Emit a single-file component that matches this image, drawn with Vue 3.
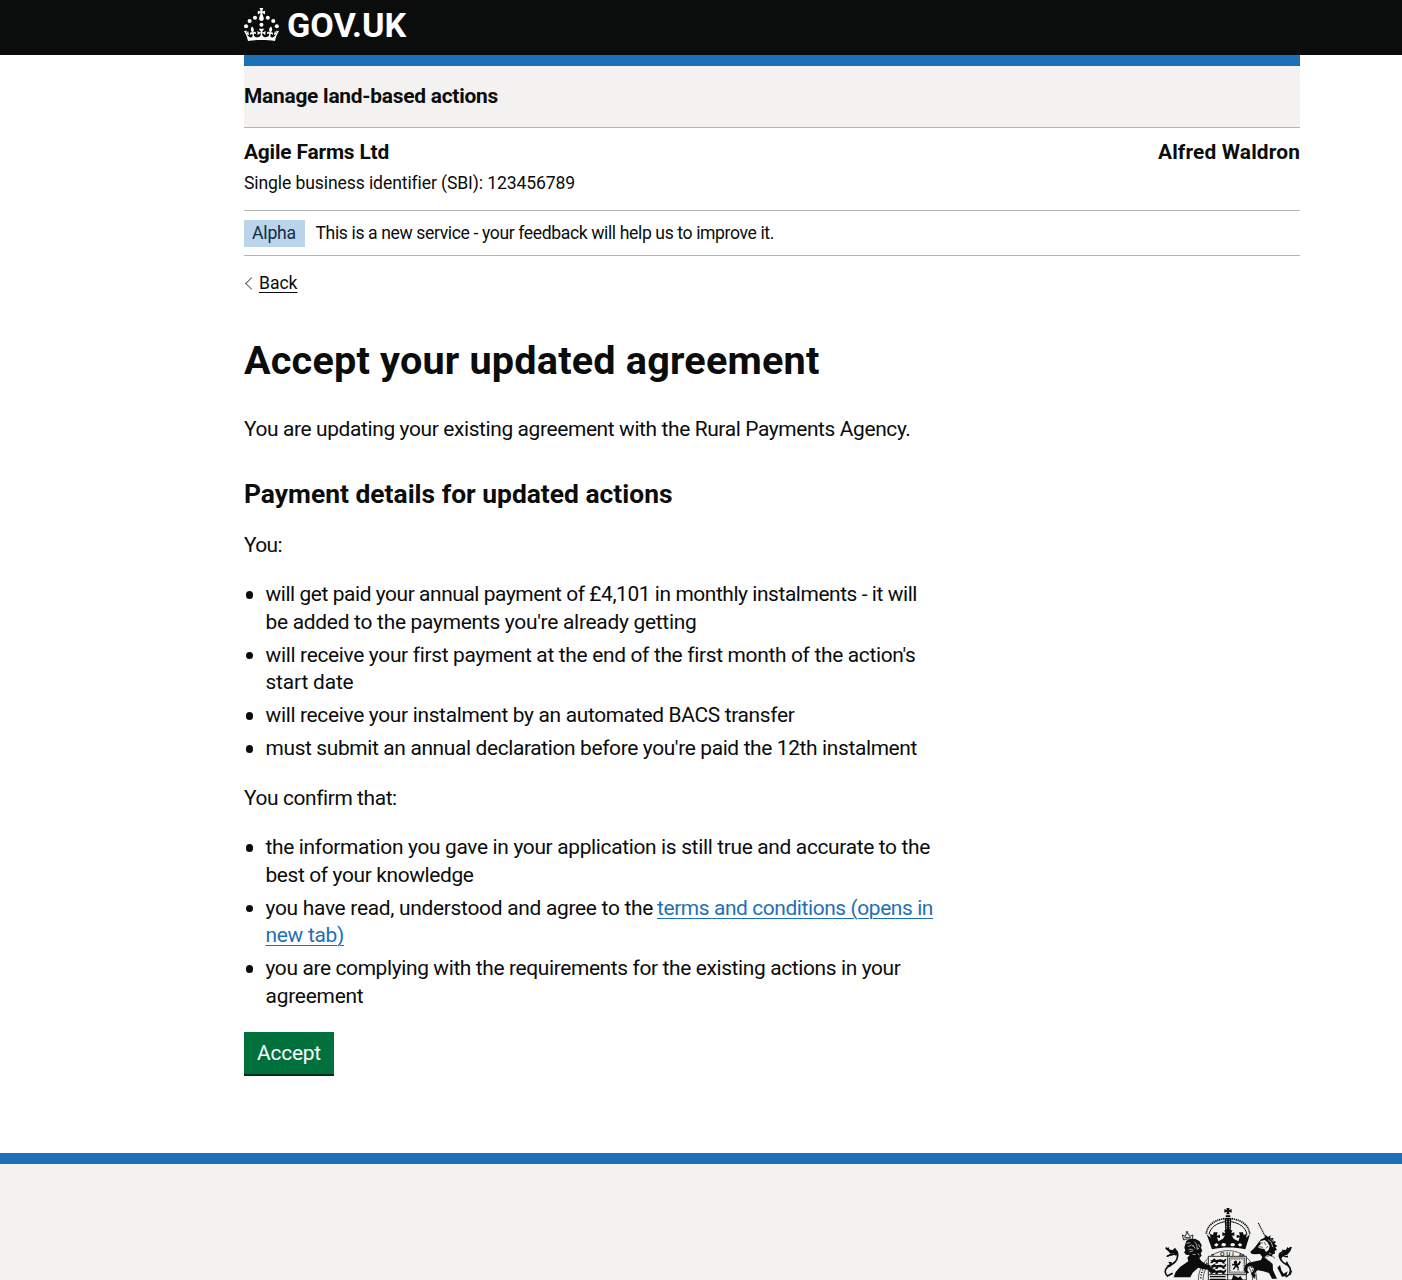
<script setup>
// Tracks a line of text so that its set width equals the given measure in px.
const vFit = {
  mounted(el, { value }) {
    const natural = el.getBoundingClientRect().width
    el.style.letterSpacing = `${(value - natural) / el.textContent.length}px`
  },
}

const paymentItems = [
  [
    { text: 'will get paid your annual payment of £4,101 in monthly instalments - it will', width: 651.5 },
    { text: "be added to the payments you're already getting", width: 431 },
  ],
  [
    { text: "will receive your first payment at the end of the first month of the action's", width: 648.5 },
    { text: 'start date', width: 88 },
  ],
  [{ text: 'will receive your instalment by an automated BACS transfer', width: 529 }],
  [{ text: "must submit an annual declaration before you're paid the 12th instalment", width: 651.5 }],
]

const confirmItems = [
  [
    { text: 'the information you gave in your application is still true and accurate to the', width: 664.5 },
    { text: 'best of your knowledge', width: 208 },
  ],
  [
    { text: 'you have read, understood and agree to the', width: 387.5, link: 'terms and conditions (opens in', linkWidth: 276 },
    { link: 'new tab)', linkWidth: 78.5 },
  ],
  [
    { text: 'you are complying with the requirements for the existing actions in your', width: 635 },
    { text: 'agreement', width: 98 },
  ],
]
</script>

<template>
  <div class="page">
    <header class="masthead">
      <svg class="logo" viewBox="0 0 324 60" role="img" aria-label="GOV.UK">
        <circle cx="20" cy="17.6" r="3.7" />
        <circle cx="10.2" cy="23.5" r="3.7" />
        <circle cx="3.7" cy="33.2" r="3.7" />
        <circle cx="31.7" cy="30.6" r="3.7" />
        <circle cx="43.3" cy="17.6" r="3.7" />
        <circle cx="53.2" cy="23.5" r="3.7" />
        <circle cx="59.7" cy="33.2" r="3.7" />
        <path d="M33.1,9.8c.2-.1.3-.3.5-.5l4.6,2.4v-6.8l-4.6,1.5c-.1-.2-.3-.3-.5-.5l1.9-5.9h-6.7l1.9,5.9c-.2.1-.3.3-.5.5l-4.6-1.5v6.8l4.6-2.4c.1.2.3.3.5.5l-2.6,8c-.9,2.8,1.2,5.7,4.1,5.7h0c3,0,5.1-2.9,4.1-5.7l-2.6-8ZM37,37.9s-3.4,3.8-4.1,6.1c2.2,0,4.2-.5,6.4-2.8l-.7,8.5c-2-2.8-4.4-4.1-5.7-3.8.1,3.1.5,6.7,5.8,7.2,3.7.3,6.7-1.5,7-3.8.4-2.6-2-4.3-3.7-1.6-1.4-4.5,2.4-6.1,4.9-3.2-1.9-4.5-1.8-7.7,2.4-10.9,3,4,2.6,7.3-1.2,11.1,2.4-1.3,6.2,0,4,4.6-1.2-2.8-3.7-2.2-4.2.2-.3,1.7.7,3.7,3,4.2,1.9.3,4.7-.9,7-5.9-1.3,0-2.4.7-3.9,1.7l2.4-8c.6,2.3,1.4,3.7,2.2,4.5.6-1.6.5-2.8,0-5.3l5,1.8c-2.6,3.6-5.2,8.7-7.3,17.5-7.4-1.1-15.7-1.7-24.5-1.7h0c-8.8,0-17.1.6-24.5,1.7-2.1-8.9-4.7-13.9-7.3-17.5l5-1.8c-.5,2.5-.6,3.7,0,5.3.8-.8,1.6-2.3,2.2-4.5l2.4,8c-1.5-1-2.6-1.7-3.9-1.7,2.3,5,5.2,6.2,7,5.9,2.3-.4,3.3-2.4,3-4.2-.5-2.4-3-3.1-4.2-.2-2.2-4.6,1.6-6,4-4.6-3.7-3.7-4.2-7.1-1.2-11.1,4.2,3.2,4.3,6.4,2.4,10.9,2.5-2.8,6.3-1.3,4.9,3.2-1.8-2.7-4.1-1-3.7,1.6.3,2.3,3.3,4.1,7,3.8,5.4-.5,5.7-4.2,5.8-7.2-1.3-.2-3.7,1-5.7,3.8l-.7-8.5c2.2,2.3,4.2,2.7,6.4,2.8-.7-2.3-4.1-6.1-4.1-6.1h10.6,0Z" />
        <text class="wordmark" x="78" y="53.4" textLength="217" lengthAdjust="spacingAndGlyphs">GOV.UK</text>
      </svg>
    </header>

    <div class="container">
      <div class="service"><b v-fit="254">Manage land-based actions</b></div>

      <div class="business">
        <div>
          <div class="name"><b v-fit="145">Agile Farms Ltd</b></div>
          <div class="sbi"><span v-fit="330.5">Single business identifier (SBI): 123456789</span></div>
        </div>
        <div class="name"><b v-fit="142">Alfred Waldron</b></div>
      </div>

      <div class="phase">
        <strong class="tag"><span v-fit="44">Alpha</span></strong>
        <span v-fit="458.5">This is a new service - your feedback will help us to improve it.</span>
      </div>

      <a class="back" href="#"><span v-fit="38.5">Back</span></a>

      <main>
        <h1><span v-fit="575.5">Accept your updated agreement</span></h1>
        <p class="intro"><span v-fit="666.5">You are updating your existing agreement with the Rural Payments Agency.</span></p>
        <h2><span v-fit="428.5">Payment details for updated actions</span></h2>
        <p><span v-fit="38">You:</span></p>
        <ul>
          <li v-for="(item, i) in paymentItems" :key="i">
            <div v-for="line in item" :key="line.text"><span v-fit="line.width">{{ line.text }}</span></div>
          </li>
        </ul>
        <p><span v-fit="152">You confirm that:</span></p>
        <ul>
          <li v-for="(item, i) in confirmItems" :key="i">
            <div v-for="line in item" :key="line.text" class="row">
              <span v-if="line.text" v-fit="line.width">{{ line.text }}</span>
              <a v-if="line.link" v-fit="line.linkWidth" href="#">{{ line.link }}</a>
            </div>
          </li>
        </ul>
        <button type="button"><span v-fit="64">Accept</span></button>
      </main>
    </div>

    <footer>
      <svg class="arms" viewBox="42 36 390 219" aria-hidden="true">
        <!-- crown -->
        <path d="M232 39h10l-2 6 8-3v11l-8-3 2 8h-10l2-8-8 3V42l8 3zM230 61h14v6h-14z" />
        <path d="M227 69h20l-2 42h-16z" />
        <path class="dash pale" d="M233 73v30M241.500 73v30" />
        <path class="line" d="M227 80c-26 5-42 17-47 38M247 80c26 5 42 17 47 38" />
        <path class="bead" d="M226 71c-31 4-53 22-54 46M248 71c31 4 53 22 54 46" />
        <path d="M173 118l12 10-3-12 10 4 2-8 12 0-3 10 10-3v10l-9-2 4 12 14-8 6-10-8 2v-11l9 3-3-9h24l-3 9 9-3v11l-8-2 6 10 14 8 4-12-9 2v-10l10 3-3-10 12 0 2 8 10-4-3 12 12-10-14 45c-32-7-68-7-100 0z" />
        <path class="pale-fill" d="M195 150l7-6 7 5-7 6zM217 149a7 5 0 1 0 14 0 7 5 0 1 0-14 0M244 149a7 5 0 1 0 14 0 7 5 0 1 0-14 0M266 149l7-5 7 6-7 5z" />
        <!-- garter -->
        <path class="line thin" d="M148 255c0-43 35-88 89-88s86 45 86 88M162 255c1-39 29-70 75-70s73 31 74 70" />
        <path class="dash wide" d="M155 250c2-20 8-34 20-47M299 203c10 12 16 27 18 47" />
        <path id="garter" class="none" d="M178 197c18-12 38-14 59-14s41 2 59 14" />
        <text class="motto" text-anchor="middle"><textPath href="#garter" startOffset="51%">T QUI M</textPath></text>
        <!-- shield -->
        <path class="shield" d="M178 184h114v71H178zM236 184v71M178 239h114" />
        <path class="line thin" d="M241 189h46v45h-46z" />
        <path class="dash" d="M245 193h38v37h-38z" />
        <g v-for="y in [190, 206, 222]" :key="y">
          <path d="M0 7l8-3 5-4 5 5 14-2 10 3 3-4 4-1-2 8-5 4 5 2-7 1-6-5-9 0-3 5-8-1 5-4-8 0-5 4-6-1 5-5z" :transform="`translate(183 ${y})`" />
        </g>
        <path d="M254 200l7-4 4 5-2 5 6-2 2-7 5 3-4 9-6 3 4 5-2 6 4 3-7 0 1-7-5-3-4 6-6 3 2-6 4-4-1-5-7 2 1-6 6 0z" />
        <path d="M183 243h47v4h-47zM183 251h47v4h-47zM253 240l15 8 6-5 8 12h-34z" />
        <!-- lion -->
        <path d="M112 137l11-5 15-1 13 7 7 12-2 9 4 8-5 8 3 7-7 7 6 9 13 9 13 4 3 8 10 3-5 5 5 5-8-2-4 4-7-10-17-2-12-4-8 7-9 8-7 14H74l6-16 13-15 14-10 11-7-3-11 7-8-11-1-6-7 4-5-3-10z" />
        <path class="pale" d="M112 145l12-2M117 155l11-5 5 4M136 140l7 8 2 14M143 164l7-5M121 171l12-4M131 178l9 1M132 150l7 11M119 163h12M149 148l4 9M146 175l5 6" />
        <path class="line crest" d="M104 135l-4-15 9 4 3-8 6 0 4 8 10-4-3 14c-8-3-17-3-25 1zM114 114v-5M110 111h8M106 128h20" />
        <path class="tail" d="M50 158c8 9 18 13 28 12 12 0 9 20 1 30-8 9-17 10-25 18-8 8-6 18 1 25l16-8M54 184c10-5 17-7 25-6" />
        <path d="M48 153l5 7 7-3v6l10 3 8-8 10 14-7 12-5-8-12 0-6-7zM50 186l14-10 9 4zM69 202l-11-2 4 8-10 4 13 3z" />
        <!-- unicorn -->
        <path class="horn" d="M328 84l20 39" />
        <path d="M336 133l10-4 3-10 8 7 8-5-2 9 11-1-3 7 10 5-5 5 9 7-6 4 5 8-7 2 1 9-7 2-3 7-9-5-8 2-5 6 13 8 12 11 1 18 7 16 5 10h-15l-9-17-17-5-17-3-10 8 5 9-8 5-7-12 10-12-5-9-14-1-2 11 5 8-8 4-7-13 4-14 11-7 19-4 17-4 4-9-7-9-16 1-10-2-3-6 12-11z" />
        <path class="pale-fill" d="M333 139l14-4 8 6 7 12-3 12-8 6-5-9-14-2-6-4 9-8z" />
        <path class="line thin" d="M334 143l7 1M345 141l6 9M328 155l14 2M351 160l6-7" />
        <path class="pale" d="M357 134l10 8 4 14M366 133l8 8M360 174l7 3M364 188l-7 10" />
        <path class="line thin" d="M352 184l15-3 11 9M342 183l10 7" />
        <path class="tail" d="M426 157c-9 12-19 12-28 15-13 5-5 21 3 29 10 9 22 9 23 23 1 14-5 18-14 22M398 180c8 3 12 5 19 5" />
        <path d="M429 155l-9 6-5-5-4 9-13-1 4 8-12 8 6 13 8-12 11-2 9-10zM385 218l8-8 4 16 7 10 12-7-4 14-13 2zM409 207l5-9 7 15zM420 233l10-8-5 16z" />
      </svg>
    </footer>
  </div>
</template>

<style>
body {
  background: #fff;
  overflow: hidden;
}
</style>

<style scoped>
.page {
  height: 1280px;
  overflow: hidden;
  color: #0b0c0c;
  font-family: Roboto, "Noto Sans", sans-serif;
  font-size: 20.9px;
  line-height: 27.5px;
}
.page span,
.page b {
  display: inline-block;
  white-space: nowrap;
}
.masthead {
  box-sizing: border-box;
  height: 55px;
  padding: 8px 0 0 244px;
  background: #0b0c0c;
}
.logo {
  display: block;
  width: 178.2px;
  height: 33px;
  overflow: visible;
  fill: #fff;
}
.wordmark {
  font: 700 60px Roboto, sans-serif;
}
.container {
  width: 1056px;
  margin-left: 244px;
}
.service {
  box-sizing: border-box;
  height: 73px;
  padding-top: 17px;
  border-top: 11px solid #1d70b8;
  border-bottom: 1px solid #b1b4b6;
  background: #f3f2f1;
}
.business {
  display: flex;
  justify-content: space-between;
  box-sizing: border-box;
  height: 83px;
  padding-top: 11px;
  border-bottom: 1px solid #b1b4b6;
}
.sbi,
.phase,
.back {
  font-size: 17.6px;
  line-height: 22px;
}
.sbi {
  margin-top: 5px;
}
.phase {
  display: flex;
  align-items: center;
  gap: 10.5px;
  box-sizing: border-box;
  height: 45px;
  border-bottom: 1px solid #b1b4b6;
}
.tag {
  box-sizing: border-box;
  width: 61px;
  height: 27px;
  padding: 2px 0 0 8px;
  background: #bbd4ea;
  color: #0c2d4a;
  font-weight: 400;
}
.back {
  display: flex;
  align-items: center;
  width: 54px;
  margin-top: 16px;
  color: #0b0c0c;
  text-decoration: none;
}
.back::before {
  width: 9px;
  height: 9px;
  margin: 0 3.5px 0 2.5px;
  border: solid #505a5f;
  border-width: 0 0 1px 1px;
  box-sizing: border-box;
  transform: rotate(45deg);
  content: "";
}
.back span {
  text-decoration: underline;
  text-decoration-thickness: 1px;
  text-underline-offset: 3px;
}
h1 {
  margin: 45px 0 33px;
  font-size: 39.6px;
  line-height: 44px;
}
h2 {
  margin: 0 0 21px;
  font-size: 26.4px;
  line-height: 33px;
}
p {
  margin: 0 0 22px;
}
.intro {
  margin-bottom: 34px;
}
ul {
  margin: 0 0 22px;
  padding-left: 21.5px;
  list-style: none;
}
li {
  position: relative;
  margin-bottom: 5.5px;
}
li::before {
  position: absolute;
  top: 10.3px;
  left: -19.5px;
  width: 7.4px;
  height: 7.4px;
  border-radius: 50%;
  background: #0b0c0c;
  content: "";
}
li:last-child {
  margin-bottom: 0;
}
.row {
  display: flex;
  gap: 4px;
}
li a {
  color: #1d70b8;
  text-decoration: underline;
  text-decoration-thickness: 1px;
  text-underline-offset: 3px;
  white-space: nowrap;
}
button {
  display: block;
  width: 90px;
  height: 42px;
  padding: 1px 0 0 13px;
  border: 0;
  background: #00703c;
  box-shadow: 0 2px 0 #002d18;
  color: #fff;
  font: inherit;
  text-align: left;
}
footer {
  display: flex;
  justify-content: flex-end;
  box-sizing: border-box;
  height: 200px;
  margin-top: 79px;
  padding: 43px 109px 0 0;
  border-top: 11px solid #1d70b8;
  background: #f3f2f1;
}
.arms {
  width: 130px;
  height: 73px;
  fill: #0b0c0c;
}
.arms .none {
  fill: none;
}
.arms .line,
.arms .bead,
.arms .dash,
.arms .pale,
.arms .tail,
.arms .horn,
.arms .shield {
  fill: none;
  stroke: #0b0c0c;
  stroke-width: 3;
}
.arms .thin {
  stroke-width: 2;
}
.arms .crest {
  stroke-width: 2.6;
}
.arms .bead {
  stroke-width: 5;
  stroke-dasharray: 4 2;
}
.arms .dash {
  stroke-width: 1.5;
  stroke-dasharray: 3 2;
}
.arms .wide {
  stroke-width: 5;
  stroke-dasharray: 3 5;
}
.arms .pale {
  stroke: #f3f2f1;
  stroke-width: 2;
}
.arms .pale-fill {
  fill: #f3f2f1;
}
.arms .tail {
  stroke-width: 5;
}
.arms .horn {
  stroke-width: 3.5;
  stroke-dasharray: 4 1.5;
}
.arms .shield {
  fill: #f3f2f1;
  stroke-width: 2.5;
}
.motto {
  font: 700 17px "Liberation Sans", sans-serif;
  letter-spacing: 5px;
}
</style>
